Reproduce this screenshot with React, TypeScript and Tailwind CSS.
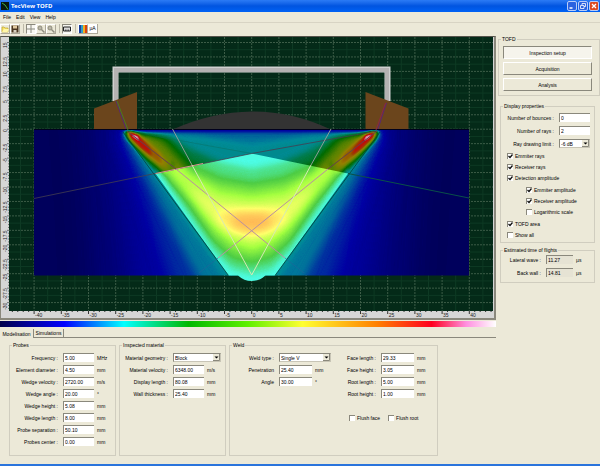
import React from 'react'
import clsx from 'clsx'

const MIDDLE = 251.7
const SURFACE = 129.2
const UNIT_X = 5.44
const UNIT_Y = 5.78

const toX = (mm: number) => MIDDLE + mm * UNIT_X
const toY = (mm: number) => SURFACE - mm * UNIT_Y

const range = (from: number, to: number, step: number) => {
  const values: number[] = []
  for (let value = from; value <= to; value += step) values.push(value)
  return values
}

const menus = ['File', 'Edit', 'View', 'Help']

const probeFields = [
  ['Frequency :', '5.00', 'MHz'],
  ['Element diameter :', '4.50', 'mm'],
  ['Wedge velocity :', '2720.00', 'm/s'],
  ['Wedge angle :', '20.00', '°'],
  ['Wedge height :', '5.08', 'mm'],
  ['Wedge length :', '8.00', 'mm'],
  ['Probe separation :', '50.10', 'mm'],
  ['Probes center :', '0.00', 'mm'],
]

const materialFields = [
  ['Material velocity :', '6348.00', 'm/s'],
  ['Display length :', '80.08', 'mm'],
  ['Wall thickness :', '25.40', 'mm'],
]

const weldFields = [
  ['Penetration', '25.40', 'mm'],
  ['Angle', '30.00', '°'],
]

const weldSizeFields = [
  ['Face length :', '29.33', 'mm'],
  ['Face height :', '3.05', 'mm'],
  ['Root length :', '5.00', 'mm'],
  ['Root height :', '1.00', 'mm'],
]

// left half of each amplitude contour, the right half is mirrored
const contours = [
  { level: 0.07, blur: 16, points: '84,90 92,200 100,350 252,350 252,90' },
  { level: 0.12, blur: 12, points: '112,120 124,190 144,340 252,340 252,120' },
  { level: 0.17, blur: 8, points: '119,130 142,190 182,310 252,310 252,130' },
  { level: 0.23, blur: 5, points: '122,132 150,184 206,294 252,294 252,132' },
  { level: 0.26, blur: 3, points: '123,132 154,175 230,286 252,288 252,145 200,137 160,133' },
  { level: 0.33, blur: 3, points: '124,131 160,173 190,216 214,251 232,269 252,274 252,169 222,163 192,150 172,138' },
  { level: 0.39, blur: 3, points: '126,132 162,171 188,206 214,243 232,260 252,265 252,181 222,176 190,162 168,139' },
  { level: 0.46, blur: 3, points: '127,133 162,168 190,202 214,236 232,251 252,257 252,189 220,184 192,172 163,141' },
  { level: 0.53, blur: 3, points: '129,134 163,163 191,196 216,229 234,243 252,249 252,197 219,192 188,174 158,142' },
  { level: 0.6, blur: 4, points: '188,186 210,216 228,233 252,241 252,205 218,202' },
  { level: 0.67, blur: 4, points: '218,219 233,231 252,235 252,210 236,210 220,212' },
  { level: 0.73, blur: 4, points: '231,223 242,229 252,230 252,214 236,215' },
]

const hotSpots = [
  { level: 0.34, blur: 1, points: '124,131 125,135 143,158 155,170 162,160 144,133' },
  { level: 0.45, blur: 2, points: '127,132 128,136 147,157 166,174 176,164 150,139' },
  { level: 0.58, blur: 2, points: '128,132 131,139 150,158 168,172 170,160 148,140' },
  { level: 0.71, blur: 2, points: '128,132 131,139 148,155 164,167 160,154 144,139' },
  { level: 0.84, blur: 1, points: '128,132 131,138 141,148 152,156 149,147 138,135' },
  { level: 0.98, blur: 1, points: '130,133 133,137 140,142 138,136' },
]

const gray = (level: number) => {
  const value = Math.round(level * 255)
  return `rgb(${value},${value},${value})`
}

const Beam: React.FC<{ shapes: typeof contours }> = ({ shapes }) => (
  <>
    {shapes.map(({ level, blur, points }) => (
      <g key={level} filter={`url(#blur${blur})`} fill={gray(level)}>
        <polygon points={points} />
        <polygon points={points} transform={`translate(${MIDDLE * 2} 0) scale(-1 1)`} />
      </g>
    ))}
  </>
)

const Scene: React.FC = () => (
  <svg viewBox="1 37 493 281" className="block h-auto w-full" role="img" aria-label="Beam amplitude">
    <defs>
      {[1, 2, 3, 4, 5, 8, 12, 16].map((blur) => (
        <filter
          key={blur}
          id={`blur${blur}`}
          filterUnits="userSpaceOnUse"
          x="0"
          y="60"
          width="500"
          height="300"
          colorInterpolationFilters="sRGB"
        >
          <feGaussianBlur stdDeviation={blur} />
        </filter>
      ))}
      <filter id="amplitude" filterUnits="userSpaceOnUse" x="34" y="129" width="436" height="154" colorInterpolationFilters="sRGB">
        <feComponentTransfer>
          <feFuncR type="table" tableValues="0 0 0 0 .38 .58 .6 .78 .95" />
          <feFuncG type="table" tableValues="0 0 .55 .42 .52 .5 .27 0 .88" />
          <feFuncB type="table" tableValues=".31 .64 .6 0 0 0 0 .05 1" />
        </feComponentTransfer>
      </filter>
      <filter id="amplitudeLight" filterUnits="userSpaceOnUse" x="34" y="129" width="436" height="154" colorInterpolationFilters="sRGB">
        <feComponentTransfer>
          <feFuncR type="table" tableValues=".3 .3 .3 .3 .64 1 1 1 1" />
          <feFuncG type="table" tableValues=".3 .5 1 .8 1 1 .68 .3 1" />
          <feFuncB type="table" tableValues=".6 1 .93 .27 .25 .42 .32 .3 1" />
        </feComponentTransfer>
      </filter>
      <clipPath id="block">
        <path d="M34 129H469V275.500H34Z" />
      </clipPath>
      <clipPath id="tofdArea">
        <path d="M251.700 153.500L155.500 173.500L228.500 275.500H238Q244 281 251.700 281T265.500 275.500H275L348 173.500Z" />
      </clipPath>
      <g id="field">
        <rect x="0" y="60" width="500" height="300" fill={gray(0.02)} />
        <Beam shapes={contours} />
        <g filter="url(#blur1)">
          <rect x="122" y="126" width="259" height="6" fill={gray(0.13)} />
        </g>
        <Beam shapes={hotSpots} />
      </g>
    </defs>

    <rect x="1" y="37" width="493" height="281" fill="#d6d6d6" />
    <rect x="9" y="37" width="484" height="274" fill="#042a18" />

    <g stroke="#0e3a24">
      {range(-42.5, 42.5, 5).map((mm) => (
        <path key={mm} d={`M${toX(mm)} 37V311`} />
      ))}
      {range(-28.75, 15, 2.5).map((mm) => (
        <path key={mm} d={`M9 ${toY(mm)}H493`} />
      ))}
    </g>
    <g stroke="#3c5c47" strokeDasharray="2 1">
      {range(-40, 40, 5).map((mm) => (
        <path key={mm} d={`M${toX(mm)} 37V311`} />
      ))}
      {range(-30, 15, 2.5).map((mm) => (
        <path key={mm} d={`M9 ${toY(mm)}H493`} />
      ))}
    </g>

    <g stroke="#333333">
      {range(-44, 44, 1).map((mm) => (
        <path key={mm} d={`M${toX(mm)} 311v${mm % 5 === 0 ? 3 : 1}`} />
      ))}
      {range(-31, 15, 0.5).map((mm) => (
        <path key={mm} d={`M9 ${toY(mm)}h${mm % 2.5 === 0 ? -2 : -1}`} strokeWidth=".6" />
      ))}
    </g>
    <g fontFamily="Liberation Sans, sans-serif" fontSize="5" fill="#222222">
      {range(-40, 40, 5).map((mm) => (
        <text key={mm} x={toX(mm) + 1} y="317">
          {mm}
        </text>
      ))}
      {range(-30, 15, 2.5).map((mm) => (
        <text key={mm} transform={`translate(7 ${toY(mm)}) rotate(-90)`} textAnchor="end">
          {mm}
        </text>
      ))}
    </g>

    <path d="M172.500 129.500Q212 112 251.700 111.500T331 129.500Z" fill="#333333" />
    <path d="M115.500 101V69.500H387.500V101" fill="none" stroke="#d0d0d0" strokeWidth="6" />
    <path d="M116 101V70H387V101" fill="none" stroke="#b4b2b2" strokeWidth="4" />
    <path d="M94 108.500L137 92V129.500H94ZM408.500 108.500L365.500 92V129.500H408.500Z" fill="#6b451c" />

    <g clipPath="url(#block)">
      <g filter="url(#amplitude)">
        <use href="#field" />
      </g>
    </g>
    <g clipPath="url(#tofdArea)">
      <g filter="url(#amplitudeLight)">
        <use href="#field" />
      </g>
    </g>

    <g fill="none">
      <path d="M34 129.500H469" stroke="#00001c" />
      <path d="M123 132L228.500 275.500M380 132L275 275.500" stroke="#00403c" strokeOpacity=".8" />
      <path d="M377 131L251.700 153.500L34 198.500" stroke="#443f50" strokeOpacity=".8" />
      <path d="M127 131L251.700 153.500" stroke="#0a6a5a" strokeOpacity=".4" />
      <path d="M348 173.500L469 198" stroke="#0a5048" />
      <path d="M155.500 173.500L203 163.500" stroke="#d79a8c" />
      <path d="M127 131L176 169M377 131L328 169" stroke="#65404c" />
      <path d="M176 169L285 258M328 169L218 258" stroke="#b990a0" />
      <path d="M285 258L304 273M218 258L199 273" stroke="#22649a" strokeOpacity=".6" />
      <path d="M172.500 129L192 165M331 129L311 165" stroke="#8e9c98" />
      <path d="M192 165L251.700 275L311 165" stroke="#d6e8b4" />
      <path d="M116 101L126 129M386.500 103L378 129" stroke="#5a2870" />
      <path d="M117 101L128 130" stroke="#4a7a20" />
      <path d="M385.500 103L376 130" stroke="#8c2840" />
    </g>
  </svg>
)

interface GroupProps {
  title: string
  className?: string
  children: React.ReactNode
}

const Group: React.FC<GroupProps> = ({ title, className, children }) => (
  <fieldset className={clsx('min-w-0 border border-[#d0cdbf] px-1', className)}>
    <legend className="-ml-[2px] px-px leading-[6px]">{title}</legend>
    {children}
  </fieldset>
)

interface FieldProps {
  label: string
  value: string
  unit?: string
  inputClass?: string
  unitClass?: string
  readOnly?: boolean
}

const Field: React.FC<FieldProps> = ({
  label,
  value,
  unit,
  inputClass = 'w-[31px]',
  unitClass = 'w-[14px]',
  readOnly,
}) => (
  <label className="flex h-[9px] items-center justify-end">
    <span className="whitespace-nowrap">{label}</span>
    <input
      defaultValue={value}
      readOnly={readOnly}
      className={clsx(
        'ml-[5px] h-[9px] shrink-0 rounded-none border-t border-l border-[#8a887c] px-px outline-none',
        readOnly ? 'bg-[#e6e3d4]' : 'bg-white',
        inputClass,
      )}
    />
    {unit && <span className={clsx('ml-[3px] shrink-0 whitespace-nowrap', unitClass)}>{unit}</span>}
  </label>
)

interface DropDownProps {
  label: string
  options: string[]
  selectClass: string
}

const DropDown: React.FC<DropDownProps> = ({ label, options, selectClass }) => (
  <label className="flex h-[9px] items-center justify-end">
    <span className="whitespace-nowrap">{label}</span>
    <span className="relative ml-[5px] flex shrink-0">
      <select
        className={clsx(
          'h-[9px] appearance-none rounded-none border border-[#8a887c] border-r-[#c8c5b6] border-b-[#c8c5b6] bg-white px-px outline-none',
          selectClass,
        )}
      >
        {options.map((option) => (
          <option key={option}>{option}</option>
        ))}
      </select>
      <svg viewBox="0 0 7 7" className="pointer-events-none absolute top-px right-px size-[7px]">
        <path d="M0 0H7V7H0Z" fill="#ece9d8" />
        <path d="M0 6.500H6.500V0" fill="none" stroke="#8a887c" />
        <path d="M1.500 2.500H5.500L3.500 4.500Z" fill="#000" />
      </svg>
    </span>
  </label>
)

const CheckBox: React.FC<{ label: string; checked?: boolean; className?: string }> = ({
  label,
  checked,
  className,
}) => (
  <label className={clsx('flex h-[6px] items-center gap-[2px]', className)}>
    <span className="relative flex">
      <input
        type="checkbox"
        defaultChecked={checked}
        className="peer size-[6px] appearance-none border-t border-l border-[#8a887c] bg-white"
      />
      <svg viewBox="0 0 6 6" className="pointer-events-none absolute inset-0 hidden size-[6px] peer-checked:block">
        <path d="M1.500 3L3 4.500L5.500 1.500" fill="none" stroke="#111" strokeWidth="1.300" />
      </svg>
    </span>
    <span className="whitespace-nowrap">{label}</span>
  </label>
)

const ToolButton: React.FC<{ label: string; pressed?: boolean; children: React.ReactNode }> = ({
  label,
  pressed,
  children,
}) => (
  <button
    type="button"
    aria-label={label}
    className={clsx(
      'flex size-[10px] items-center justify-center border',
      pressed
        ? 'border-t-[#8a887c] border-r-white border-b-white border-l-[#8a887c] bg-[#f8f7f1]'
        : 'border-t-white border-r-[#aca899] border-b-[#aca899] border-l-white',
    )}
  >
    {children}
  </button>
)

const Magnifier: React.FC = () => (
  <svg viewBox="0 0 8 8" className="size-2">
    <circle cx="3" cy="3" r="2" fill="#bab7a6" stroke="#8f8c7e" />
    <path d="M4.500 4.500L7.500 7.500" stroke="#8f8c7e" strokeWidth="1.500" />
  </svg>
)

const Separator: React.FC = () => <div className="mr-[2px] ml-[3px] h-[9px] w-px bg-[#bdb9a8]" />

const Toolbar: React.FC = () => (
  <div className="flex h-[14px] items-center border-t border-[#d8d4c4] pb-[2px]">
    <ToolButton label="Open">
      <svg viewBox="0 0 8 8" className="size-2">
        <path d="M1 7V2H3L4 3H7V7Z" fill="#f7e36a" stroke="#b59a20" strokeWidth=".6" />
        <path d="M1 7L3 4H8L6.500 7Z" fill="#fff6a8" />
      </svg>
    </ToolButton>
    <ToolButton label="Save">
      <svg viewBox="0 0 8 8" className="size-2">
        <path d="M.5.500H7.500V7.500H.5Z" fill="#4a3520" />
        <path d="M2 .5H6V3.500H2Z" fill="#e0c9a0" />
        <path d="M2.500 5H5.500V7.500H2.500Z" fill="#d8d0c0" />
      </svg>
    </ToolButton>
    <Separator />
    <ToolButton label="Cursor" pressed>
      <svg viewBox="0 0 8 8" className="size-2">
        <path d="M4 0V8M0 4H8" stroke="#8a8a80" />
      </svg>
    </ToolButton>
    <ToolButton label="Zoom in">
      <Magnifier />
    </ToolButton>
    <ToolButton label="Zoom out">
      <Magnifier />
    </ToolButton>
    <Separator />
    <ToolButton label="Rulers" pressed>
      <svg viewBox="0 0 8 8" className="size-2">
        <path d="M.5 2H7.500V6H.5Z" fill="#d8d8d8" stroke="#222" />
        <path d="M2.500 6V4.500M4 6V4.500M5.500 6V4.500" stroke="#222" strokeWidth=".6" />
      </svg>
    </ToolButton>
    <Separator />
    <ToolButton label="Palette">
      <svg viewBox="0 0 8 8" className="size-2">
        <path d="M0 0H2V8H0Z" fill="#1b3f9c" />
        <path d="M2 0H4V8H2Z" fill="#2f9fc8" />
        <path d="M4 0H6V8H4Z" fill="#f0b020" />
        <path d="M6 0H8V8H6Z" fill="#d84010" />
      </svg>
    </ToolButton>
    <button
      type="button"
      className="flex size-[10px] items-center justify-center border-r border-b border-[#aca899] bg-white leading-none"
    >
      µA
    </button>
  </div>
)

const TitleBar: React.FC = () => (
  <header className="flex h-3 items-center bg-linear-to-b from-[#2b7bf5] via-[#0054e0] to-[#0062f5] px-px">
    <svg viewBox="0 0 8 8" className="size-2">
      <path d="M0 0H8V8H0Z" fill="#08180c" />
      <path d="M1 1L4 3L7 7.500" fill="none" stroke="#3fae4a" />
    </svg>
    <h1 className="ml-[2px] flex-1 font-['Noto_Sans',sans-serif] text-[6px] leading-none font-bold text-white">
      TecView TOFD
    </h1>
    <div className="flex gap-px">
      {['Minimize', 'Restore', 'Close'].map((name) => (
        <button
          key={name}
          type="button"
          aria-label={name}
          className={clsx(
            'size-[10px] rounded-[2px] border border-[#b8ccf8]',
            name === 'Close' ? 'bg-[#dc4a20]' : 'bg-[#2b62e0]',
          )}
        >
          <svg viewBox="0 0 8 8" className="size-2" fill="none" stroke="#fff">
            {name === 'Minimize' && <path d="M1.500 6H4.500" strokeWidth="1.500" />}
            {name === 'Restore' && <path d="M3 3V1.500H6.500V4.500H5M1.500 3.500H5V6.500H1.500Z" strokeWidth=".8" />}
            {name === 'Close' && <path d="M2 2L6 6M6 2L2 6" strokeWidth="1.300" />}
          </svg>
        </button>
      ))}
    </div>
  </header>
)

const SidePanel: React.FC = () => (
  <aside className="w-[102px] shrink-0">
    <Group title="TOFD" className="pb-1">
      <div className="flex flex-col gap-[3px] pt-1 pr-[3px]">
        {['Inspection setup', 'Acquisition', 'Analysis'].map((name, index) => (
          <button
            key={name}
            type="button"
            className={clsx(
              'h-[13px] border',
              index === 0
                ? 'border-t-[#8a887c] border-r-white border-b-white border-l-[#8a887c] bg-[#f6f4ec]'
                : 'border-t-white border-r-[#8a887c] border-b-[#8a887c] border-l-white',
            )}
          >
            {name}
          </button>
        ))}
      </div>
    </Group>

    <Group title="Display properties" className="mt-[7px] mr-[5px] ml-[2px] pb-1">
      <div className="flex flex-col gap-1 pt-1">
        <Field label="Number of bounces :" value="0" />
        <Field label="Number of rays :" value="2" />
        <DropDown label="Ray drawing limit :" options={['-6 dB', '-12 dB']} selectClass="w-[31px]" />
      </div>
      <div className="flex flex-col gap-[5px] pt-[5px] pl-[2px]">
        <CheckBox label="Emmiter rays" checked />
        <CheckBox label="Receiver rays" checked />
        <CheckBox label="Detection amplitude" checked />
        <CheckBox label="Emmiter amplitude" checked className="mt-px pl-[19px]" />
        <CheckBox label="Receiver amplitude" checked className="pl-[19px]" />
        <CheckBox label="Logarithmic scale" className="pl-[19px]" />
        <CheckBox label="TOFD area" checked className="mt-px" />
        <CheckBox label="Show all" />
      </div>
    </Group>

    <Group title="Estimated time of flights" className="mt-1 mr-[5px] ml-[2px] pb-[5px]">
      <div className="flex flex-col gap-1 pt-[2px]">
        <Field label="Lateral wave :" value="11.27" unit="µs" inputClass="w-[27px]" readOnly />
        <Field label="Back wall :" value="14.81" unit="µs" inputClass="w-[27px]" readOnly />
      </div>
    </Group>
  </aside>
)

const Parameters: React.FC = () => (
  <section className="pt-[2px]">
    <div className="flex h-[9px] items-stretch" role="tablist">
      <button type="button" role="tab" aria-selected className="w-[34px] border-r border-[#8a887c]">
        Modelisation
      </button>
      <button type="button" role="tab" aria-selected={false} className="w-[30px] border-r border-b border-[#8a887c]">
        Simulations
      </button>
      <div className="flex-1 border-b border-[#8a887c]" />
    </div>
    <div className="flex gap-[3px] pt-1 pl-[9px]">
      <Group title="Probes" className="h-[114px] w-[107px]">
        <div className="flex flex-col gap-[3px] pt-[5px]">
          {probeFields.map(([label, value, unit]) => (
            <Field key={label} label={label} value={value} unit={unit} />
          ))}
        </div>
      </Group>
      <Group title="Inspected material" className="h-[114px] w-[107px]">
        <div className="flex flex-col gap-[3px] pt-[5px]">
          <DropDown label="Material geometry :" options={['Block', 'Pipe']} selectClass="w-[48px]" />
          {materialFields.map(([label, value, unit]) => (
            <Field key={label} label={label} value={value} unit={unit} />
          ))}
        </div>
      </Group>
      <Group title="Weld" className="h-[114px] w-[209px]">
        <div className="flex justify-between pt-[5px]">
          <div className="flex w-[97px] flex-col gap-[3px]">
            <DropDown label="Weld type :" options={['Single V', 'Double V']} selectClass="w-[52px]" />
            {weldFields.map(([label, value, unit]) => (
              <Field key={label} label={label} value={value} unit={unit} inputClass="w-[33px]" unitClass="w-4" />
            ))}
          </div>
          <div className="flex w-[91px] flex-col gap-[3px]">
            {weldSizeFields.map(([label, value, unit]) => (
              <Field key={label} label={label} value={value} unit={unit} inputClass="w-[33px]" unitClass="w-4" />
            ))}
            <div className="flex gap-2 pt-[14px] pl-[7px]">
              <CheckBox label="Flush face" />
              <CheckBox label="Flush root" />
            </div>
          </div>
        </div>
      </Group>
    </div>
  </section>
)

const App: React.FC = () => (
  <div className="flex min-h-screen flex-col border-b-2 border-[#2a74dc] bg-[#ece9d8] font-['Liberation_Sans',Arial,sans-serif] text-[5px] leading-[6px] text-black">
    <TitleBar />
    <nav className="flex h-[10px] items-center gap-[5px] pl-[3px]">
      {menus.map((menu) => (
        <button key={menu} type="button">
          {menu}
        </button>
      ))}
    </nav>
    <Toolbar />
    <div className="flex flex-1 gap-[2px]">
      <main className="min-w-0 flex-1">
        <div className="border-t border-r-2 border-b-2 border-l border-[#8a887c] border-t-[#55534b]">
          <Scene />
        </div>
        <div className="mt-px h-[6px] bg-[linear-gradient(90deg,#00004a_0%,#0000ff_13%,#00ffff_25%,#00b800_38%,#60f000_50%,#ffff30_61%,#ff8000_76%,#ff0020_87%,#ff90e0_94%,#ffffff_100%)]" />
        <Parameters />
      </main>
      <SidePanel />
    </div>
  </div>
)

export default App
